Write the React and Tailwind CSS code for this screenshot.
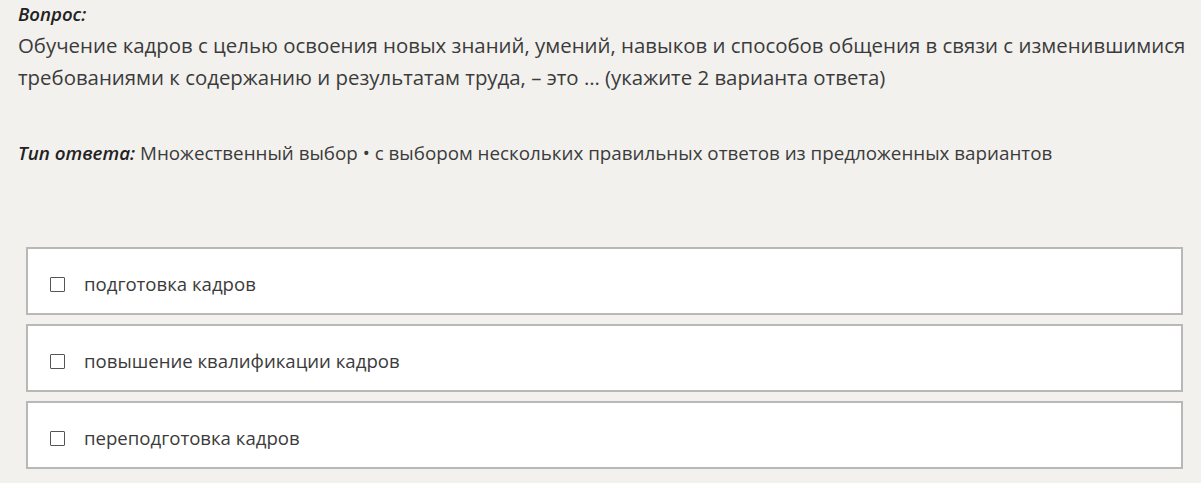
const options = [
  'подготовка кадров',
  'повышение квалификации кадров',
  'переподготовка кадров',
];

export default function App() {
  return (
    <div className="w-[1201px] h-[483px] overflow-hidden bg-[#f2f1ee] text-[#3b3b3b] font-['Open_Sans',sans-serif]">
      <div className="pl-[18px] pr-[10px] pt-[2px]">
        <div className="text-[18.6px] leading-[24px] font-semibold italic text-[#222]">Вопрос:</div>
        <p className="mt-[3px] text-[20.4px] leading-[32px] whitespace-nowrap">
          Обучение кадров с целью освоения новых знаний, умений, навыков и способов общения в связи с изменившимися
          <br />
          требованиями к содержанию и результатам труда, – это … (укажите 2 варианта ответа)
        </p>
        <p className="mt-[47px] text-[18.8px] leading-[26px] whitespace-nowrap">
          <span className="font-semibold italic text-[#222]">Тип ответа:</span> Множественный выбор • с выбором нескольких правильных ответов из предложенных вариантов
        </p>
      </div>
      <div className="mt-[81px] ml-[26px] mr-[18px] flex flex-col gap-[9px]">
        {options.map((text) => (
          <div key={text} className="h-[68px] bg-white border-2 border-[#b8b8b6] flex items-center pl-[22px] pt-[6px]">
            <span className="w-[15px] h-[15px] border-[1.5px] border-[#555] rounded-[1px]" />
            <span className="ml-[19px] text-[18.6px] text-[#3b3b3b]">{text}</span>
          </div>
        ))}
      </div>
    </div>
  );
}
